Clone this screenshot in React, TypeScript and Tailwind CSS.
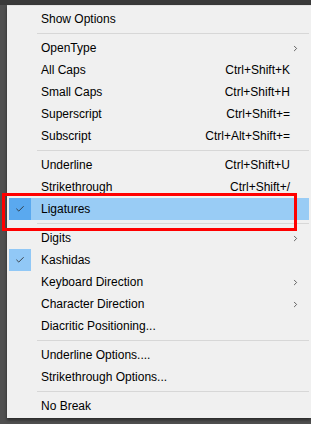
import { Check, ChevronRight } from "lucide-react";

type Item =
  | { sep: true }
  | {
      sep?: false;
      label: string;
      shortcut?: string;
      sub?: boolean;
      checked?: boolean;
      active?: boolean;
    };

const items: Item[] = [
  { label: "Show Options" },
  { sep: true },
  { label: "OpenType", sub: true },
  { label: "All Caps", shortcut: "Ctrl+Shift+K" },
  { label: "Small Caps", shortcut: "Ctrl+Shift+H" },
  { label: "Superscript", shortcut: "Ctrl+Shift+=" },
  { label: "Subscript", shortcut: "Ctrl+Alt+Shift+=" },
  { sep: true },
  { label: "Underline", shortcut: "Ctrl+Shift+U" },
  { label: "Strikethrough", shortcut: "Ctrl+Shift+/" },
  { label: "Ligatures", checked: true, active: true },
  { sep: true },
  { label: "Digits", sub: true },
  { label: "Kashidas", checked: true },
  { label: "Keyboard Direction", sub: true },
  { label: "Character Direction", sub: true },
  { label: "Diacritic Positioning..." },
  { sep: true },
  { label: "Underline Options...." },
  { label: "Strikethrough Options..." },
  { sep: true },
  { label: "No Break" },
];

const MenuRow = ({ item }: { item: Exclude<Item, { sep: true }> }) => (
  <div
    className={`flex items-center h-[22px] mx-[2px] ${
      item.active ? "bg-[#99ccf5]" : ""
    }`}
  >
    <div
      className={`w-[22px] h-[22px] flex items-center justify-center ${
        item.checked ? (item.active ? "bg-[#5aa9ef]" : "bg-[#91c8f6]") : ""
      }`}
    >
      {item.checked && <Check size={10} strokeWidth={2} color="#2a2a2a" />}
    </div>
    <span className="ml-[10px] flex-1 text-black">{item.label}</span>
    {item.shortcut && <span className="text-black mr-[19px]">{item.shortcut}</span>}
    {item.sub && (
      <ChevronRight size={9} strokeWidth={2} color="#333" className="mr-[9px]" />
    )}
  </div>
);

export default function App() {
  return (
    <div
      className="relative w-[311px] h-[424px] bg-[#505050] overflow-hidden"
      style={{ fontFamily: '"Liberation Sans", sans-serif' }}
    >
      <div className="h-[5px] bg-[#3a3a3a]" />
      <div className="ml-[7px] w-[304px] h-[413px] bg-[#f0f0f0] border-t border-[#e3e3e3] pt-[2px] text-[12px] shadow-[0_2px_3px_rgba(0,0,0,0.5)]">
        {items.map((item, i) =>
          item.sep ? (
            <div key={i} className="h-[7px] flex items-center ml-[30px] mr-[2px]">
              <div className="h-px w-full bg-[#d7d7d7]" />
            </div>
          ) : (
            <MenuRow key={i} item={item} />
          )
        )}
      </div>
      <div className="absolute left-[2px] top-[193px] w-[295px] h-[38px] border-[3px] border-[#ff0000]" />
    </div>
  );
}
